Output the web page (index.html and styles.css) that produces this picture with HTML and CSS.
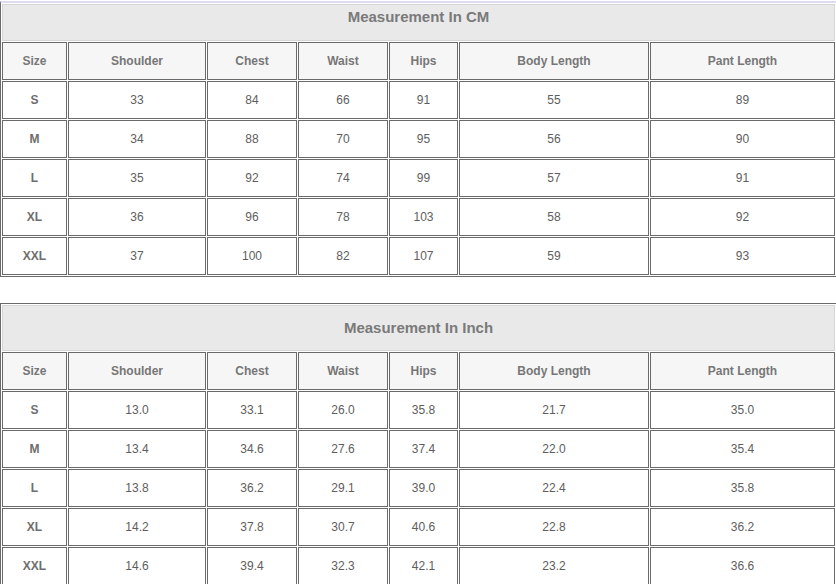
FILE: index.html
```html
<!DOCTYPE html>
<html lang="en">
<head>
<meta charset="utf-8">
<title>Size Chart</title>
<link rel="stylesheet" href="styles.css">
</head>
<body>
<div class="page">
  <table class="chart chart-cm">
    <tr><td class="title" colspan="7">Measurement In CM</td></tr>
    <tr class="head">
      <th class="c1">Size</th><th class="c2">Shoulder</th><th class="c3">Chest</th><th class="c4">Waist</th><th class="c5">Hips</th><th class="c6">Body Length</th><th class="c7">Pant Length</th>
    </tr>
    <tr><th>S</th><td>33</td><td>84</td><td>66</td><td>91</td><td>55</td><td>89</td></tr>
    <tr><th>M</th><td>34</td><td>88</td><td>70</td><td>95</td><td>56</td><td>90</td></tr>
    <tr><th>L</th><td>35</td><td>92</td><td>74</td><td>99</td><td>57</td><td>91</td></tr>
    <tr><th>XL</th><td>36</td><td>96</td><td>78</td><td>103</td><td>58</td><td>92</td></tr>
    <tr><th>XXL</th><td>37</td><td>100</td><td>82</td><td>107</td><td>59</td><td>93</td></tr>
  </table>

  <table class="chart chart-inch">
    <tr><td class="title" colspan="7">Measurement In Inch</td></tr>
    <tr class="head">
      <th class="c1">Size</th><th class="c2">Shoulder</th><th class="c3">Chest</th><th class="c4">Waist</th><th class="c5">Hips</th><th class="c6">Body Length</th><th class="c7">Pant Length</th>
    </tr>
    <tr><th>S</th><td>13.0</td><td>33.1</td><td>26.0</td><td>35.8</td><td>21.7</td><td>35.0</td></tr>
    <tr><th>M</th><td>13.4</td><td>34.6</td><td>27.6</td><td>37.4</td><td>22.0</td><td>35.4</td></tr>
    <tr><th>L</th><td>13.8</td><td>36.2</td><td>29.1</td><td>39.0</td><td>22.4</td><td>35.8</td></tr>
    <tr><th>XL</th><td>14.2</td><td>37.8</td><td>30.7</td><td>40.6</td><td>22.8</td><td>36.2</td></tr>
    <tr><th>XXL</th><td>14.6</td><td>39.4</td><td>32.3</td><td>42.1</td><td>23.2</td><td>36.6</td></tr>
  </table>
</div>
</body>
</html>
```

FILE: styles.css
```css
html, body {
  margin: 0;
  padding: 0;
  overflow: hidden;
  background: #ffffff;
}

.page {
  padding-top: 1px;
  width: 840px;
  font-family: "Liberation Sans", Arial, sans-serif;
}

.chart {
  border-collapse: separate;
  border-spacing: 1px;
  border: 1px solid #6a6a6a;
  width: 837px;
  table-layout: auto;
}

.chart-cm {
  border-top: 2px solid #dcdcee;
}

.chart-inch {
  margin-top: 26px;
}

.chart th,
.chart td {
  box-sizing: border-box;
  border: 1px solid #6a6a6a;
  padding: 0;
  height: 38px;
  text-align: center;
  vertical-align: middle;
  font-size: 12px;
  color: #666666;
  background: #ffffff;
}

.chart th {
  font-weight: bold;
  color: #6e6e6e;
}

.chart td {
  font-weight: normal;
  color: #5e5e5e;
}

.chart .title {
  background: #e9e9e9;
  border-color: #d6d6d6;
  font-size: 15px;
  font-weight: bold;
  color: #7a7a7a;
}

.chart-cm .title {
  height: 37px;
  padding-bottom: 13px;
}

.chart-inch .title {
  height: 46px;
  padding-bottom: 2px;
}

.chart .head th {
  background: #f6f6f6;
  color: #777777;
}

.c1 { width: 65px; }
.c2 { width: 138px; }
.c3 { width: 90px; }
.c4 { width: 90px; }
.c5 { width: 69px; }
.c6 { width: 190px; }
.c7 { width: 185px; }
```
